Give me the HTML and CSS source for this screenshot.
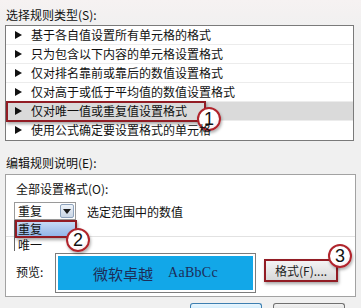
FILE: index.html
```html
<!DOCTYPE html>
<html lang="zh">
<head>
<meta charset="utf-8">
<link rel="stylesheet" href="styles.css">
</head>
<body>
<div class="dialog">
  <div class="label">选择规则类型(S):</div>
  <div class="rulelist">
    <div class="rule"><span class="arrow"></span>基于各自值设置所有单元格的格式</div>
    <div class="rule"><span class="arrow"></span>只为包含以下内容的单元格设置格式</div>
    <div class="rule"><span class="arrow"></span>仅对排名靠前或靠后的数值设置格式</div>
    <div class="rule"><span class="arrow"></span>仅对高于或低于平均值的数值设置格式</div>
    <div class="rule selected"><span class="arrow"></span>仅对唯一值或重复值设置格式<span class="mark mark1"></span><span class="badge b1">1</span></div>
    <div class="rule last"><span class="arrow"></span>使用公式确定要设置格式的单元格</div>
  </div>
  <div class="label label2">编辑规则说明(E):</div>
  <div class="editbox">
    <div class="sub">全部设置格式(O):</div>
    <div class="selrow">
      <div class="select">
        <span class="selval">重复</span>
        <span class="dd"><svg width="8" height="5" viewBox="0 0 8 5"><path d="M0 0H8L4 5Z" fill="#1a1a1a"/></svg></span>
        <div class="popup">
          <div class="opt active">重复</div>
          <div class="opt">唯一</div>
          <span class="mark mark2"></span>
          <span class="badge b2">2</span>
        </div>
      </div>
      <span class="seltext">选定范围中的数值</span>
    </div>
    <div class="sep"></div>
    <div class="prevrow">
      <span class="prevlabel">预览:</span>
      <div class="preview">
        <div class="preview-inner"><span class="cn">微软卓越</span><span class="en">AaBbCc</span></div>
      </div>
      <div class="fmtwrap">
        <div class="fmt">格式(F)....</div>
        <span class="badge b3">3</span>
      </div>
    </div>
  </div>
  <div class="buttons">
    <div class="btn ok"></div>
    <div class="btn"></div>
  </div>
</div>
</body>
</html>
```
FILE: styles.css
```css
html, body {
  margin: 0;
  padding: 0;
  background: #f0f0f0;
  overflow: hidden;
}
body {
  font-family: "Noto Sans CJK SC", "Noto Sans", sans-serif;
  font-size: 12px;
  color: #111;
}
.dialog {
  width: 361px;
  height: 308px;
  padding-top: 7px;
  box-sizing: border-box;
  overflow: hidden;
  background: linear-gradient(#f6f2f2, #f0f0f0 30px);
}
.label {
  margin-left: 6px;
  line-height: 16px;
  height: 16px;
}
.rulelist {
  margin: 2px 0 0 5px;
  width: 347px;
  border: 1px solid #7a7a7a;
  background: #fff;
  padding-bottom: 1px;
}
.rule {
  position: relative;
  height: 18px;
  line-height: 18px;
  border-bottom: 1px solid #ececec;
  display: flex;
  align-items: center;
  white-space: nowrap;
}
.rule.last { border-bottom: none; }
.rule.selected { background: #dadada; }
.arrow {
  width: 0;
  height: 0;
  border-left: 7px solid #111;
  border-top: 4px solid transparent;
  border-bottom: 4px solid transparent;
  margin: 0 9px 0 9px;
}
.mark {
  position: absolute;
  border: 2px solid #921c24;
  box-shadow: 1px 2px 3px rgba(0,0,0,0.35);
  box-sizing: border-box;
  pointer-events: none;
}
.mark1 {
  left: 0;
  top: -1px;
  width: 200px;
  height: 21px;
}
.badge {
  position: absolute;
  width: 24px;
  height: 24px;
  box-sizing: border-box;
  border: 2px solid #b0242c;
  border-radius: 50%;
  background: radial-gradient(circle at 40% 35%, #ffffff 55%, #f1dcdc);
  box-shadow: 1px 2px 3px rgba(0,0,0,0.3);
  font-family: "Liberation Sans", Arial, sans-serif;
  font-size: 18px;
  line-height: 20px;
  text-align: center;
  color: #111;
}
.b1 { left: 191px; top: 5px; }
.label2 { margin-top: 14px; }
.editbox {
  margin: 3px 0 0 5px;
  width: 349px;
  border: 1px solid #a2a2a2;
  background: #fff;
  padding-bottom: 3px;
}
.sub {
  margin: 6px 0 0 10px;
  line-height: 16px;
  height: 16px;
}
.selrow {
  margin: 5px 0 0 8px;
  display: flex;
  align-items: center;
  height: 18px;
}
.select {
  position: relative;
  width: 62px;
  height: 18px;
  box-sizing: border-box;
  border: 1px solid #9a9a9a;
  background: #fff;
  display: flex;
  align-items: center;
  justify-content: space-between;
}
.selval {
  padding-left: 3px;
  line-height: 16px;
}
.dd {
  width: 14px;
  height: 14px;
  margin-right: 1px;
  box-sizing: border-box;
  border: 1px solid #8ea3bd;
  border-radius: 2px;
  background: linear-gradient(#eef3f9, #c9d6e6);
  display: flex;
  align-items: center;
  justify-content: center;
}
.seltext { margin-left: 11px; }
.popup {
  position: absolute;
  left: -1px;
  top: 17px;
  width: 62px;
  height: 31px;
  box-sizing: border-box;
  border-left: 1px solid #666;
  background: #fff;
  z-index: 2;
}
.opt {
  height: 16px;
  line-height: 16px;
  padding-left: 3px;
}
.opt.active {
  margin-top: 1px;
  background: linear-gradient(#c9dcf6, #8fb3e6);
}
.mark2 {
  left: 0;
  top: 0;
  width: 62px;
  height: 18px;
}
.b2 { left: 51px; top: 8px; }
.sep {
  margin-top: 16px;
  height: 1px;
  background: #e2e2e2;
}
.prevrow {
  margin-top: 16px;
  padding-left: 10px;
  display: flex;
  align-items: flex-start;
}
.prevlabel {
  width: 39px;
  line-height: 16px;
  margin-top: 11px;
}
.preview {
  width: 201px;
  height: 40px;
  box-sizing: border-box;
  border: 1px solid #7c7c7c;
  padding: 2px;
  background: #fff;
}
.preview-inner {
  height: 100%;
  background: #12a7e8;
  display: flex;
  align-items: center;
  justify-content: center;
  gap: 15px;
  color: #1c2d58;
}
.cn {
  font-size: 15px;
}
.en {
  font-family: "Liberation Serif", "Times New Roman", serif;
  font-size: 14px;
  letter-spacing: 0.3px;
}
.fmtwrap {
  position: relative;
  margin: 6px 0 0 8px;
}
.fmt {
  width: 74px;
  height: 23px;
  box-sizing: border-box;
  border: 2px solid #921c24;
  box-shadow: 1px 2px 3px rgba(0,0,0,0.35);
  background: linear-gradient(#f4f4f4, #d8d8d8);
  line-height: 19px;
  padding-left: 9px;
  white-space: nowrap;
  color: #222;
}
.b3 { left: 64px; top: -15px; }
.buttons {
  display: flex;
  justify-content: flex-end;
  gap: 11px;
  padding-right: 16px;
  margin-top: 6px;
}
.btn {
  width: 72px;
  height: 5px;
  box-sizing: border-box;
  border: 1px solid #707070;
  border-bottom: none;
  border-radius: 3px 3px 0 0;
  background: linear-gradient(#f2f2f2, #e6e6e6);
}
.btn.ok {
  border-color: #3c7fb1;
  background: linear-gradient(#eaf6fd, #d4eefd);
}
```
